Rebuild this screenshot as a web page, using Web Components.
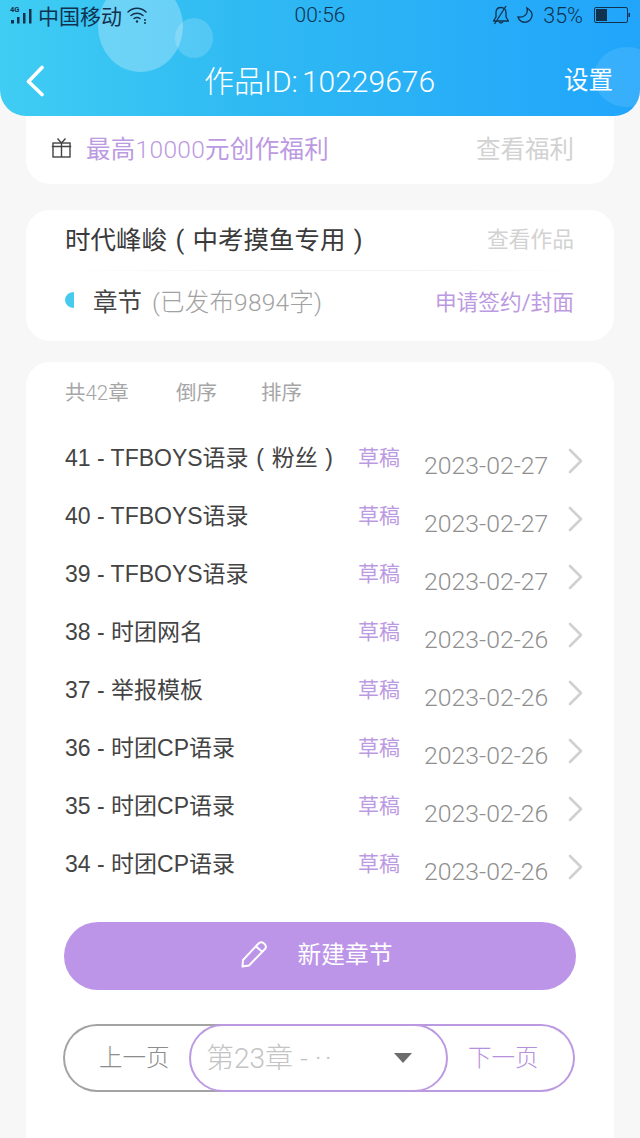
<!DOCTYPE html>
<html lang="zh">
<head>
<meta charset="utf-8">
<title>作品</title>
<style>
  html, body { margin: 0; padding: 0; }
  body {
    height: 1138px;
    overflow: hidden;
    background: #f7f7f8;
    font-family: Roboto, "Noto Sans CJK SC", sans-serif;
    font-weight: 300;
  }
  main { display: flex; flex-direction: column; padding: 0 26px; }
</style>
</head>
<body>
<app-header work-id="10229676"></app-header>
<main>
  <welfare-card></welfare-card>
  <work-card></work-card>
  <chapter-card>
    <chapter-row title="41 - TFBOYS语录(粉丝)" date="2023-02-27"></chapter-row>
    <chapter-row title="40 - TFBOYS语录" date="2023-02-27"></chapter-row>
    <chapter-row title="39 - TFBOYS语录" date="2023-02-27"></chapter-row>
    <chapter-row title="38 - 时团网名" date="2023-02-26"></chapter-row>
    <chapter-row title="37 - 举报模板" date="2023-02-26"></chapter-row>
    <chapter-row title="36 - 时团CP语录" date="2023-02-26"></chapter-row>
    <chapter-row title="35 - 时团CP语录" date="2023-02-26"></chapter-row>
    <chapter-row title="34 - 时团CP语录" date="2023-02-26"></chapter-row>
  </chapter-card>
</main>

<script>
// brackets sit centred in a full CJK cell in the reference
const centerParens = (text) => text.replace(/[()]/g, '<span style="display:inline-block;width:1em;text-align:center">$&</span>');

class AppHeader extends HTMLElement {
    constructor() {
        super();
        this.shadowDOM = this.attachShadow({mode: 'open'});
    }

    connectedCallback() {
        this.shadowDOM.innerHTML = `
            <style>
                :host{
                    display: block;
                    position: relative;
                    z-index: 2;
                    height: 116px;
                    overflow: hidden;
                    border-radius: 0 0 26px 26px;
                    background: linear-gradient(90deg, #3fcdf3 0%, #2fb9f3 40%, #21a5fb 100%);
                    box-sizing: border-box;
                }
                .bubble{
                    position: absolute;
                    border-radius: 50%;
                }
                .b1{ left: 98px; top: -19px; width: 85px; height: 91px; background: rgba(255,255,255,.27); }
                .b2{ left: 175px; top: 18px; width: 38px; height: 40px; background: rgba(255,255,255,.17); }
                .b3{ left: 594px; top: 47px; width: 66px; height: 60px; background: rgba(255,255,255,.1); }
                .status{
                    position: relative;
                    display: grid;
                    grid-template-columns: 1fr auto 1fr;
                    align-items: center;
                    height: 30px;
                    padding: 0 10px 0 10px;
                    color: #10324f;
                }
                .left, .right{ display: flex; align-items: center; }
                .left{ gap: 1px; font-size: 21px; font-weight: 400; }
                .right{ justify-content: flex-end; }
                .time{ font-size: 21px; font-weight: 300; }
                .pct{ font-size: 21.500px; margin: 0 11px 0 9px; }
                svg{ display: block; }
                .nav{
                    position: relative;
                    display: grid;
                    grid-template-columns: 1fr auto 1fr;
                    align-items: center;
                    height: 68px;
                    margin-top: 17px;
                    padding: 0 27px 0 26px;
                    color: #fff;
                }
                .title{ font-size: 30px; font-weight: 300; margin-bottom: 4px; }
                .title span{ margin-left: 4px; }
                .set{ justify-self: end; font-size: 24.500px; font-weight: 400; margin-bottom: 6px; }
            </style>
            <div class="bubble b1"></div>
            <div class="bubble b2"></div>
            <div class="bubble b3"></div>
            <div class="status">
                <div class="left">
                    <svg width="27" height="22" viewBox="0 0 27 22" fill="#10324f">
                        <text x="0" y="8" font-size="7.500" font-family="Roboto" font-weight="700">4G</text>
                        <rect x="1" y="16" width="3" height="3.500"/><rect x="7" y="13" width="2.500" height="6.500"/>
                        <rect x="13" y="9" width="2.500" height="10.500"/><rect x="19" y="5" width="2.500" height="14.500"/>
                    </svg>
                    <span>中国移动</span>
                    <svg style="margin-left:3px" width="23" height="20" viewBox="0 0 23 20" fill="none" stroke="#10324f" stroke-width="1.500" stroke-linecap="round">
                        <path d="M2 7C7 2 15 2 20 7"/><path d="M5 10.500C8.500 7.500 13.500 7.500 17 10.500"/><path d="M8 13.500C9.800 12.200 12.200 12.200 14 13.500"/>
                        <circle cx="11" cy="16.500" r="1.200" fill="#10324f" stroke="none"/><circle cx="19" cy="15" r="1" fill="#10324f" stroke="none"/><circle cx="19" cy="18" r="1" fill="#10324f" stroke="none"/>
                    </svg>
                </div>
                <div class="time">00:56</div>
                <div class="right">
                    <svg width="18" height="20" viewBox="0 0 18 20" fill="none" stroke="#10324f" stroke-width="1.300" stroke-linejoin="round">
                        <path d="M1.500 16H16.500L14 12V7.500C14 4.500 12 2.500 9 2.500S4 4.500 4 7.500V12Z"/><path d="M7 16.500C7.300 18.500 10.700 18.500 11 16.500"/><path d="M2.500 19L14 1"/>
                    </svg>
                    <svg width="18" height="18" viewBox="0 0 18 18" fill="none" stroke="#10324f" stroke-width="1.300" style="margin-left:6px">
                        <path d="M11 2C12.500 8 8 12 2 11C3 15 7 17 10.500 16C15 15 18 9 14.500 5C13.500 3.800 12.300 2.800 11 2Z"/>
                    </svg>
                    <span class="pct">35%</span>
                    <svg width="36" height="17" viewBox="0 0 36 17">
                        <rect x=".5" y=".5" width="33" height="15" rx="1.500" fill="none" stroke="#10324f"/>
                        <rect x="2" y="2" width="11" height="12" fill="#10324f"/>
                        <rect x="34.500" y="6" width="1.500" height="4" fill="#10324f"/>
                    </svg>
                </div>
            </div>
            <div class="nav">
                <svg width="20" height="32" viewBox="0 0 20 32" fill="none" stroke="#fff" stroke-width="3.600" stroke-linecap="round" stroke-linejoin="round">
                    <path d="M16 2.500L2.500 16.500L16 29.500"/>
                </svg>
                <div class="title">作品ID:<span>${this.getAttribute('work-id')}</span></div>
                <div class="set">设置</div>
            </div>
        `;
    }
}

class WelfareCard extends HTMLElement {
    constructor() {
        super();
        this.shadowDOM = this.attachShadow({mode: 'open'});
    }

    connectedCallback() {
        this.shadowDOM.innerHTML = `
            <style>
                :host{
                    display: flex;
                    align-items: center;
                    height: 68px;
                    padding: 0 40px 5px 25px;
                    box-sizing: border-box;
                    background: #fff;
                    border-radius: 0 0 24px 24px;
                }
                svg{ margin-right: 14px; }
                .txt{ flex: 1; color: #bc9ae2; font-size: 24.500px; font-weight: 400; letter-spacing: .3px; }
                .txt span{ font-weight: 300; }
                .more{ color: #d2d2d2; font-size: 24.500px; font-weight: 400; }
            </style>
            <svg width="21" height="22" viewBox="0 0 21 22" fill="none" stroke="#444" stroke-width="1.400">
                <rect x="2" y="6" width="17" height="14"/><path d="M.8 9.500H20.200M10.500 6V20M10.500 6L6.500 1.500M10.500 6L14.500 1.500"/>
            </svg>
            <div class="txt">最高<span>10000</span>元创作福利</div>
            <div class="more">查看福利</div>
        `;
    }
}

class WorkCard extends HTMLElement {
    constructor() {
        super();
        this.shadowDOM = this.attachShadow({mode: 'open'});
    }

    connectedCallback() {
        this.shadowDOM.innerHTML = `
            <style>
                :host{
                    display: block;
                    margin-top: 26px;
                    height: 131px;
                    box-sizing: border-box;
                    padding: 0 40px 0 39px;
                    background: #fff;
                    border-radius: 24px;
                }
                .row{ display: flex; align-items: center; justify-content: space-between; }
                .top{ height: 61px; padding-bottom: 6px; box-sizing: border-box; border-bottom: 1px solid; border-image: linear-gradient(90deg, #fff, #f1f1f3 40%, #f1f1f3 70%, #fff) 1; }
                .bottom{ height: 62px; padding-bottom: 4px; box-sizing: border-box; }
                .name{ color: #3a3a3a; font-size: 25.500px; font-weight: 400; white-space: nowrap; }
                .view{ color: #d2d2d2; font-size: 21.750px; font-weight: 400; }
                .sec{ display: flex; align-items: center; }
                .dot{
                    width: 9px; height: 16px; margin-right: 19px;
                    background: #46cbef;
                    border-radius: 9px 0 0 9px / 8px 0 0 8px;
                }
                .ch{ color: #444; font-size: 24.500px; font-weight: 400; }
                .pub{ color: #a2a2a2; font-size: 24.500px; margin-left: 10px; font-weight: 300; letter-spacing: .2px; }
                .sign{ color: #bc9ae2; font-size: 21.700px; font-weight: 400; }
            </style>
            <div class="row top">
                <div class="name">${centerParens('时代峰峻(中考摸鱼专用)')}</div>
                <div class="view">查看作品</div>
            </div>
            <div class="row bottom">
                <div class="sec"><span class="dot"></span><span class="ch">章节</span><span class="pub">(已发布9894字)</span></div>
                <div class="sign">申请签约/封面</div>
            </div>
        `;
    }
}

class ChapterRow extends HTMLElement {
    constructor() {
        super();
        this.shadowDOM = this.attachShadow({mode: 'open'});
    }

    connectedCallback() {
        this.shadowDOM.innerHTML = `
            <style>
                :host{
                    display: grid;
                    grid-template-columns: 293px 66px 1fr 24px;
                    height: 58px;
                    align-items: center;
                    padding-left: 39px;
                    padding-right: 31px;
                }
                .t{ color: #444; font-family: "Liberation Sans", "Noto Sans CJK SC", sans-serif; font-size: 23px; font-weight: 400; white-space: nowrap; margin-bottom: 16px; }
                .tag{ color: #bc9ae2; font-size: 21px; font-weight: 400; margin-bottom: 16px; }
                .d{ color: #8f8f8f; font-size: 24.800px; font-weight: 300; white-space: nowrap; margin-top: 2px; }
                svg{ display: block; justify-self: end; margin-bottom: 7px; }
            </style>
            <div class="t">${centerParens(this.getAttribute('title'))}</div>
            <div class="tag">草稿</div>
            <div class="d">${this.getAttribute('date')}</div>
            <svg width="16" height="26" viewBox="0 0 16 26" fill="none" stroke="#d0d0d0" stroke-width="2.600" stroke-linecap="round" stroke-linejoin="round">
                <path d="M3 2L14 13L3 24"/>
            </svg>
        `;
    }
}

class ChapterCard extends HTMLElement {
    constructor() {
        super();
        this.shadowDOM = this.attachShadow({mode: 'open'});
    }

    connectedCallback() {
        this.shadowDOM.innerHTML = `
            <style>
                :host{
                    display: block;
                    margin-top: 21px;
                    height: 800px;
                    background: #fff;
                    border-radius: 24px;
                }
                .tools{
                    display: flex;
                    align-items: center;
                    height: 57px;
                    padding-left: 39px;
                    color: #a6a6a6;
                    font-size: 20.500px;
                    font-weight: 400;
                    margin-bottom: 16px;
                }
                .tools i{ font-style: normal; font-weight: 300; }
                .tools span:nth-child(1){ width: 111px; }
                .tools span:nth-child(2){ width: 85px; }
                .new{
                    display: flex;
                    align-items: center;
                    justify-content: center;
                    gap: 28px;
                    height: 68px;
                    margin: 23px 38px 0;
                    padding: 0 7px 4px 0;
                    box-sizing: border-box;
                    border-radius: 34px;
                    background: #bc94e8;
                    color: #fff;
                    font-size: 23.750px;
                    font-weight: 400;
                }
                .new span{ margin-bottom: 3px; }
                pager-bar{ margin: 34px 39px 0 37px; }
            </style>
            <div class="tools"><span>共<i>42</i>章</span><span>倒序</span><span>排序</span></div>
            <slot></slot>
            <div class="new">
                <svg width="29" height="29" viewBox="0 0 29 29" fill="none" stroke="#fff" stroke-width="2" stroke-linejoin="round">
                    <path d="M2.500 26.500L3 20L18.500 3.500C20 2 22 2 24 3.500C26 5 26.500 7.500 25 9L9 25.500Z"/><path d="M16 6.500L22.500 12"/>
                </svg>
                <span>新建章节</span>
            </div>
            <pager-bar></pager-bar>
        `;
    }
}

class PagerBar extends HTMLElement {
    constructor() {
        super();
        this.shadowDOM = this.attachShadow({mode: 'open'});
    }

    connectedCallback() {
        this.shadowDOM.innerHTML = `
            <style>
                :host{
                    display: grid;
                    grid-template-columns: 126px 259px 1fr;
                    height: 68px;
                    box-sizing: border-box;
                    font-size: 23.500px;
                    font-weight: 300;
                    background: #fff;
                }
                .side{ display: flex; align-items: center; height: 68px; padding-bottom: 4px; box-sizing: border-box; }
                .prev{
                    color: #8c8c8c;
                    border: 2px solid #a3a3a3;
                    border-right: 0;
                    border-radius: 34px 0 0 34px;
                    padding-left: 34px;
                    margin-right: -40px;
                }
                .next{
                    color: #b590dd;
                    border: 2px solid #bc9ae2;
                    border-left: 0;
                    border-radius: 0 34px 34px 0;
                    margin-left: -40px;
                    padding-left: 60px;
                }
                .select{
                    position: relative;
                    z-index: 1;
                    display: flex;
                    align-items: center;
                    height: 68px;
                    box-sizing: border-box;
                    padding: 0 34px 0 15px;
                    background: #fff;
                    border: 2px solid #bc9ae2;
                    border-radius: 34px;
                    color: #c4c4c4;
                    font-size: 28px;
                }
                .select span{ flex: 1; margin-bottom: 4px; }
                .select b{ font-weight: 300; letter-spacing: 3px; }
                .arrow{
                    width: 0; height: 0;
                    border-left: 9px solid transparent;
                    border-right: 9px solid transparent;
                    border-top: 10px solid #6c6c6c;
                }
            </style>
            <div class="side prev">上一页</div>
            <div class="select"><span>第23章 - <b>··</b></span><i class="arrow"></i></div>
            <div class="side next">下一页</div>
        `;
    }
}

customElements.define('app-header', AppHeader);
customElements.define('welfare-card', WelfareCard);
customElements.define('work-card', WorkCard);
customElements.define('chapter-row', ChapterRow);
customElements.define('chapter-card', ChapterCard);
customElements.define('pager-bar', PagerBar);
</script>
</body>
</html>
